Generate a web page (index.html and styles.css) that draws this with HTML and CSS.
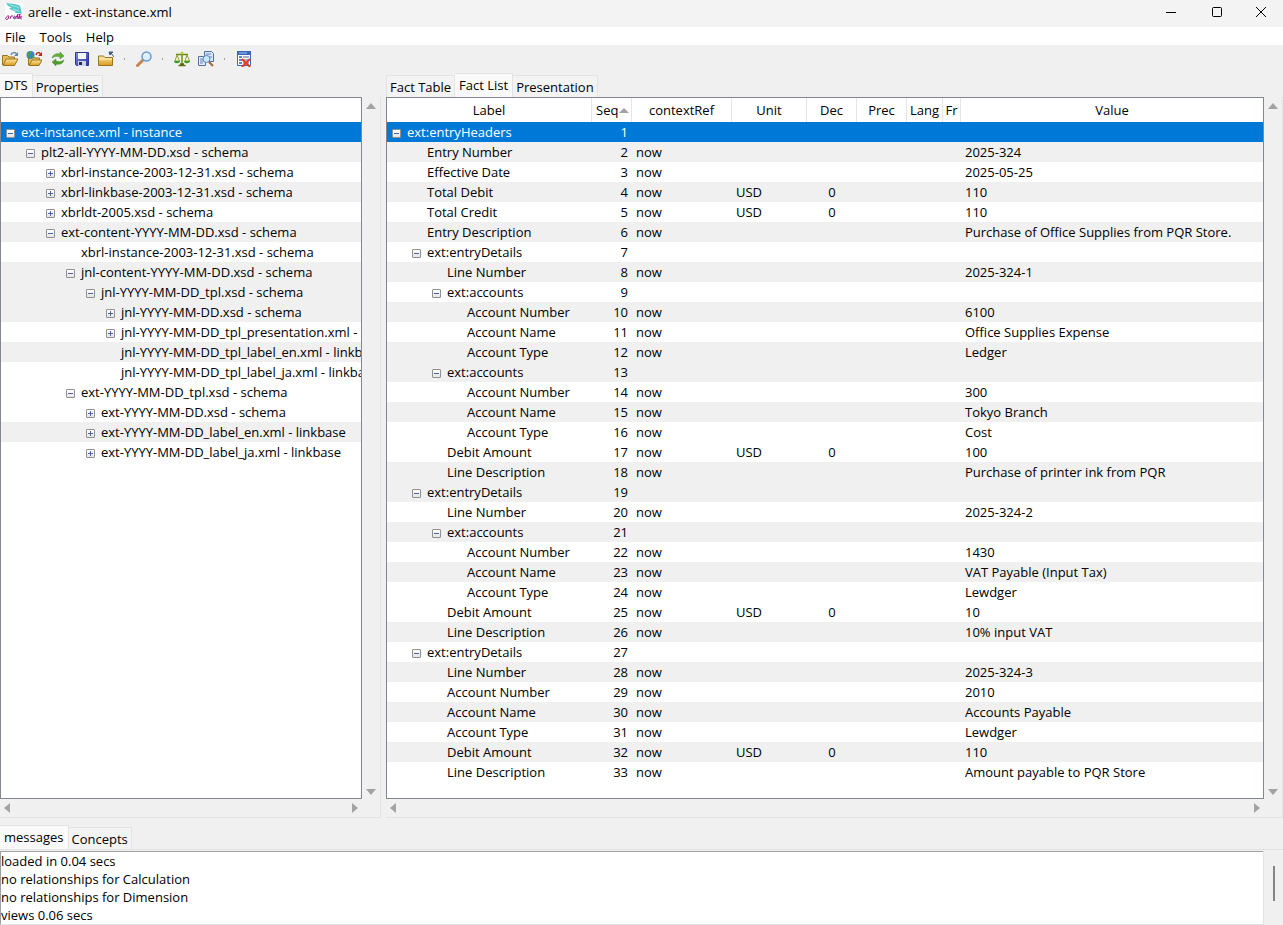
FILE: index.html
```html
<!DOCTYPE html>
<html lang="en">
<head>
  <meta charset="UTF-8">
  <title>arelle - ext-instance.xml</title>
  <link rel="stylesheet" href="styles.css">
</head>
<body>
  <!-- shared gradients -->
  <svg class="defs" aria-hidden="true">
    <defs>
      <linearGradient id="gold" x1="0" y1="0" x2="0" y2="1"><stop offset="0" stop-color="#fdeaa0"/><stop offset="1" stop-color="#d99a1c"/></linearGradient>
      <linearGradient id="blue" x1="0" y1="0" x2="1" y2="1"><stop offset="0" stop-color="#7f8df0"/><stop offset="1" stop-color="#2a2fa0"/></linearGradient>
    </defs>
  </svg>

  <header class="titlebar">
    <svg class="logo" viewBox="0 0 18 18" aria-hidden="true">
      <rect width="18" height="18" fill="#fff"/>
      <path d="M1 0c4 1 10 0 14 3 1 2 1 5 2 8-3-1-5 0-8-2l2-1C7 8 5 6 4 5l3 0C4 4 2 2 1 0z" fill="#58c9c9"/>
      <path d="M5 2c3 1 6 1 9 3M8 6l6 2" stroke="#a5e6e4" fill="none"/>
      <path d="M1 15c1-3 3-2 3-2l-1 3c-2 1-3 0-2-1m4 1l1-3 2 0M8 15c2 0 3-1 2-2-2 0-2 3 0 3l3-5-1 5m1 0l2-5-1 5m1-1c2 0 2-2 1-2-2 1-1 3 1 3" stroke="#a3208f" fill="none"/>
    </svg>
    <span class="title">arelle - ext-instance.xml</span>
    <button class="win" aria-label="Minimize"><svg viewBox="0 0 12 12"><path d="M1 6.500h10" stroke="#000"/></svg></button>
    <button class="win" aria-label="Maximize"><svg viewBox="0 0 12 12"><rect x="1.500" y="1.500" width="9" height="9" rx="1" fill="none" stroke="#000"/></svg></button>
    <button class="win" aria-label="Close"><svg viewBox="0 0 12 12"><path d="M1 1l10 10M11 1L1 11" stroke="#000" fill="none"/></svg></button>
  </header>

  <nav class="menubar">
    <button>File</button>
    <button>Tools</button>
    <button>Help</button>
  </nav>

  <div class="toolbar">
    <button aria-label="Open file"><svg viewBox="0 0 16 16">
      <path d="M.5 14V4.500h5L7 6h5.500v3" fill="#e9bd55" stroke="#9a7420"/>
      <path d="M1 14.500L4 8h12l-3.500 6.500z" fill="url(#gold)" stroke="#9a7420"/>
      <path d="M9 4c1-3 4-3 5.500-1" fill="none" stroke="#6d87a8" stroke-width="1.500"/><path d="M16 1v4h-4z" fill="#6d87a8"/></svg></button>
    <button aria-label="Open web"><svg viewBox="0 0 16 16">
      <path d="M2.500 14V6h5L9 7h4.500v2" fill="#e9bd55" stroke="#9a7420"/>
      <path d="M3 14.500L6 9h10l-3 5.500z" fill="url(#gold)" stroke="#9a7420"/>
      <circle cx="4.500" cy="4" r="4" fill="#3c7fd0"/><path d="M1 3l3-3 2 2-3 2 1 3-2-1zM6 4l2 1-2 3z" fill="#45a83c"/>
      <path d="M10 4c1-3 3-3 4.500-1" fill="none" stroke="#c62020" stroke-width="1.500"/><path d="M16 1v4h-4z" fill="#c62020"/></svg></button>
    <button aria-label="Reload"><svg viewBox="0 0 16 16">
      <path d="M2 7c1-4 5-5 8-4V1l4 4-4 3V6C7 5 5 5 2 7z" fill="#63b03a" stroke="#3f8724" stroke-width=".5"/>
      <path d="M14 9c-1 4-5 5-8 4v2l-4-4 4-3v2c3 1 5 1 8-1z" fill="#4f9c2c" stroke="#3f8724" stroke-width=".5"/></svg></button>
    <button aria-label="Save"><svg viewBox="0 0 16 16">
      <path d="M1.500 1.500h13v13h-12l-1-1z" fill="url(#blue)" stroke="#30359a"/>
      <path d="M4 2h8v6H4z" fill="#f4f6ff"/><path d="M4 10h8v5H4z" fill="#cdd2e4"/><path d="M5 11h3v3H5z" fill="#252a66"/></svg></button>
    <button aria-label="Close file"><svg viewBox="0 0 16 16">
      <path d="M.5 14.500V5h5L7 6.500h7.500v8z" fill="url(#gold)" stroke="#9a7420"/>
      <path d="M1 8h13" stroke="#fff0b8"/><path d="M11 1h4L12 4zM13 2l3 4" fill="#3b5a86" stroke="#3b5a86"/></svg></button>
    <span class="sep"></span>
    <button aria-label="Find"><svg viewBox="0 0 16 16">
      <path d="M1.500 14.500L7 9" stroke="#c9824e" stroke-width="3" stroke-linecap="round"/>
      <circle cx="10.500" cy="5.500" r="4.500" fill="#d7efff" stroke="#6b9bd6" stroke-width="1.500"/><path d="M8 5c0-2 2-2 3-2" stroke="#fff" fill="none"/></svg></button>
    <span class="sep"></span>
    <button aria-label="Compare"><svg viewBox="0 0 16 16">
      <path d="M8 1v12M2 3.500h12" stroke="#6c8a12" stroke-width="1.500"/><path d="M4.500 14.500h7M6 13h4" stroke="#556f10" stroke-width="1.500"/>
      <path d="M3 4L1 10h4.500zM13 4l-2 6h4.500z" fill="#f6f8d8" stroke="#8fa22e"/>
      <path d="M0 10h6c0 3-6 3-6 0zM10 10h6c0 3-6 3-6 0z" fill="#3b9a25"/><circle cx="8" cy="2" r="1.500" fill="#b8cc28"/></svg></button>
    <button aria-label="Validate"><svg viewBox="0 0 16 16">
      <path d="M6.500.5h7l2 2v8h-9z" fill="#dce8f8" stroke="#51719f"/><path d="M.5 5.500h7v9h-7z" fill="#e8f0fb" stroke="#51719f"/>
      <path d="M8 3h5M2 8h3M2 10h3M2 12h3M12 6h2" stroke="#5e83b8"/>
      <circle cx="8.500" cy="8" r="3.500" fill="#c6e9fb" stroke="#5e83b8"/><path d="M11 11l4 4" stroke="#a7653c" stroke-width="2"/></svg></button>
    <span class="sep"></span>
    <button aria-label="Clear messages"><svg viewBox="0 0 16 16">
      <path d="M1.500.5h13v14h-13z" fill="#fff" stroke="#3b67b8"/><path d="M1 0h14v4H1z" fill="#3b67b8"/><path d="M3 2h8" stroke="#a9c4f0"/>
      <path d="M3 5h3v2H3zM3 8h3v2H3zM3 11h3v2H3z" fill="#5a88d4"/><path d="M7 6h6M7 9h6M7 12h6" stroke="#4b64a0"/>
      <path d="M6 8l8 8M14 8l-8 8" stroke="#e33b22" stroke-width="2"/></svg></button>
  </div>

  <main class="panes">
    <section class="pane left">
      <div class="tabs">
        <button class="active">DTS</button>
        <button>Properties</button>
      </div>
      <div class="frame">
        <div class="view">
          <div class="tree-head"></div>
          <ul class="tree">
            <li class="lv0 selected"><button class="tg" aria-label="Collapse"></button>ext-instance.xml - instance</li>
            <li class="lv1 odd"><button class="tg" aria-label="Collapse"></button>plt2-all-YYYY-MM-DD.xsd - schema</li>
            <li class="lv2"><button class="tg plus" aria-label="Expand"></button>xbrl-instance-2003-12-31.xsd - schema</li>
            <li class="lv2 odd"><button class="tg plus" aria-label="Expand"></button>xbrl-linkbase-2003-12-31.xsd - schema</li>
            <li class="lv2"><button class="tg plus" aria-label="Expand"></button>xbrldt-2005.xsd - schema</li>
            <li class="lv2 odd"><button class="tg" aria-label="Collapse"></button>ext-content-YYYY-MM-DD.xsd - schema</li>
            <li class="lv3">xbrl-instance-2003-12-31.xsd - schema</li>
            <li class="lv3 odd"><button class="tg" aria-label="Collapse"></button>jnl-content-YYYY-MM-DD.xsd - schema</li>
            <li class="lv4 odd"><button class="tg" aria-label="Collapse"></button>jnl-YYYY-MM-DD_tpl.xsd - schema</li>
            <li class="lv5 odd"><button class="tg plus" aria-label="Expand"></button>jnl-YYYY-MM-DD.xsd - schema</li>
            <li class="lv5"><button class="tg plus" aria-label="Expand"></button>jnl-YYYY-MM-DD_tpl_presentation.xml - linkbase</li>
            <li class="lv5 odd">jnl-YYYY-MM-DD_tpl_label_en.xml - linkbase</li>
            <li class="lv5">jnl-YYYY-MM-DD_tpl_label_ja.xml - linkbase</li>
            <li class="lv3"><button class="tg" aria-label="Collapse"></button>ext-YYYY-MM-DD_tpl.xsd - schema</li>
            <li class="lv4"><button class="tg plus" aria-label="Expand"></button>ext-YYYY-MM-DD.xsd - schema</li>
            <li class="lv4 odd"><button class="tg plus" aria-label="Expand"></button>ext-YYYY-MM-DD_label_en.xml - linkbase</li>
            <li class="lv4"><button class="tg plus" aria-label="Expand"></button>ext-YYYY-MM-DD_label_ja.xml - linkbase</li>
          </ul>
        </div>
        <div class="vbar"><i class="up"></i><i class="down"></i></div>
        <div class="hbar"><i class="prev"></i><i class="next"></i></div>
      </div>
    </section>

    <section class="pane right">
      <div class="tabs">
        <button>Fact Table</button>
        <button class="active">Fact List</button>
        <button>Presentation</button>
      </div>
      <div class="frame">
        <div class="view">
          <table class="facts">
            <colgroup>
              <col class="c-label"><col class="c-seq"><col class="c-ctx"><col class="c-unit"><col class="c-dec"><col class="c-dec"><col class="c-lang"><col class="c-fr"><col>
            </colgroup>
            <thead>
              <tr><th>Label</th><th class="sorted">Seq<i class="sort"></i></th><th>contextRef</th><th>Unit</th><th>Dec</th><th>Prec</th><th>Lang</th><th>Fr</th><th>Value</th></tr>
            </thead>
            <tbody>
              <tr class="selected"><td class="lv0"><button class="tg" aria-label="Collapse"></button>ext:entryHeaders</td><td>1</td><td></td><td></td><td></td><td></td><td></td><td></td><td></td></tr>
              <tr class="odd"><td class="lv1">Entry Number</td><td>2</td><td>now</td><td></td><td></td><td></td><td></td><td></td><td>2025-324</td></tr>
              <tr><td class="lv1">Effective Date</td><td>3</td><td>now</td><td></td><td></td><td></td><td></td><td></td><td>2025-05-25</td></tr>
              <tr class="odd"><td class="lv1">Total Debit</td><td>4</td><td>now</td><td>USD</td><td>0</td><td></td><td></td><td></td><td>110</td></tr>
              <tr><td class="lv1">Total Credit</td><td>5</td><td>now</td><td>USD</td><td>0</td><td></td><td></td><td></td><td>110</td></tr>
              <tr class="odd"><td class="lv1">Entry Description</td><td>6</td><td>now</td><td></td><td></td><td></td><td></td><td></td><td>Purchase of Office Supplies from PQR Store.</td></tr>
              <tr><td class="lv1"><button class="tg" aria-label="Collapse"></button>ext:entryDetails</td><td>7</td><td></td><td></td><td></td><td></td><td></td><td></td><td></td></tr>
              <tr class="odd"><td class="lv2">Line Number</td><td>8</td><td>now</td><td></td><td></td><td></td><td></td><td></td><td>2025-324-1</td></tr>
              <tr><td class="lv2"><button class="tg" aria-label="Collapse"></button>ext:accounts</td><td>9</td><td></td><td></td><td></td><td></td><td></td><td></td><td></td></tr>
              <tr class="odd"><td class="lv3">Account Number</td><td>10</td><td>now</td><td></td><td></td><td></td><td></td><td></td><td>6100</td></tr>
              <tr><td class="lv3">Account Name</td><td>11</td><td>now</td><td></td><td></td><td></td><td></td><td></td><td>Office Supplies Expense</td></tr>
              <tr class="odd"><td class="lv3">Account Type</td><td>12</td><td>now</td><td></td><td></td><td></td><td></td><td></td><td>Ledger</td></tr>
              <tr class="odd"><td class="lv2"><button class="tg" aria-label="Collapse"></button>ext:accounts</td><td>13</td><td></td><td></td><td></td><td></td><td></td><td></td><td></td></tr>
              <tr><td class="lv3">Account Number</td><td>14</td><td>now</td><td></td><td></td><td></td><td></td><td></td><td>300</td></tr>
              <tr class="odd"><td class="lv3">Account Name</td><td>15</td><td>now</td><td></td><td></td><td></td><td></td><td></td><td>Tokyo Branch</td></tr>
              <tr><td class="lv3">Account Type</td><td>16</td><td>now</td><td></td><td></td><td></td><td></td><td></td><td>Cost</td></tr>
              <tr><td class="lv2">Debit Amount</td><td>17</td><td>now</td><td>USD</td><td>0</td><td></td><td></td><td></td><td>100</td></tr>
              <tr class="odd"><td class="lv2">Line Description</td><td>18</td><td>now</td><td></td><td></td><td></td><td></td><td></td><td>Purchase of printer ink from PQR</td></tr>
              <tr class="odd"><td class="lv1"><button class="tg" aria-label="Collapse"></button>ext:entryDetails</td><td>19</td><td></td><td></td><td></td><td></td><td></td><td></td><td></td></tr>
              <tr><td class="lv2">Line Number</td><td>20</td><td>now</td><td></td><td></td><td></td><td></td><td></td><td>2025-324-2</td></tr>
              <tr class="odd"><td class="lv2"><button class="tg" aria-label="Collapse"></button>ext:accounts</td><td>21</td><td></td><td></td><td></td><td></td><td></td><td></td><td></td></tr>
              <tr><td class="lv3">Account Number</td><td>22</td><td>now</td><td></td><td></td><td></td><td></td><td></td><td>1430</td></tr>
              <tr class="odd"><td class="lv3">Account Name</td><td>23</td><td>now</td><td></td><td></td><td></td><td></td><td></td><td>VAT Payable (Input Tax)</td></tr>
              <tr><td class="lv3">Account Type</td><td>24</td><td>now</td><td></td><td></td><td></td><td></td><td></td><td>Lewdger</td></tr>
              <tr><td class="lv2">Debit Amount</td><td>25</td><td>now</td><td>USD</td><td>0</td><td></td><td></td><td></td><td>10</td></tr>
              <tr class="odd"><td class="lv2">Line Description</td><td>26</td><td>now</td><td></td><td></td><td></td><td></td><td></td><td>10% input VAT</td></tr>
              <tr><td class="lv1"><button class="tg" aria-label="Collapse"></button>ext:entryDetails</td><td>27</td><td></td><td></td><td></td><td></td><td></td><td></td><td></td></tr>
              <tr class="odd"><td class="lv2">Line Number</td><td>28</td><td>now</td><td></td><td></td><td></td><td></td><td></td><td>2025-324-3</td></tr>
              <tr><td class="lv2">Account Number</td><td>29</td><td>now</td><td></td><td></td><td></td><td></td><td></td><td>2010</td></tr>
              <tr class="odd"><td class="lv2">Account Name</td><td>30</td><td>now</td><td></td><td></td><td></td><td></td><td></td><td>Accounts Payable</td></tr>
              <tr><td class="lv2">Account Type</td><td>31</td><td>now</td><td></td><td></td><td></td><td></td><td></td><td>Lewdger</td></tr>
              <tr class="odd"><td class="lv2">Debit Amount</td><td>32</td><td>now</td><td>USD</td><td>0</td><td></td><td></td><td></td><td>110</td></tr>
              <tr><td class="lv2">Line Description</td><td>33</td><td>now</td><td></td><td></td><td></td><td></td><td></td><td>Amount payable to PQR Store</td></tr>
            </tbody>
          </table>
        </div>
        <div class="vbar"><i class="up"></i><i class="down"></i></div>
        <div class="hbar"><i class="prev"></i><i class="next"></i></div>
      </div>
    </section>
  </main>

  <section class="bottom">
    <div class="tabs">
      <button class="active">messages</button>
      <button>Concepts</button>
    </div>
    <div class="log-wrap">
      <ul class="log">
        <li>loaded in 0.04 secs</li>
        <li>no relationships for Calculation</li>
        <li>no relationships for Dimension</li>
        <li>views 0.06 secs</li>
      </ul>
      <div class="log-bar"><i class="thumb"></i></div>
    </div>
  </section>
</body>
</html>
```
FILE: styles.css
```css
* {
  box-sizing: border-box;
}
body {
  margin: 0;
  min-height: 100vh;
  display: flex;
  flex-direction: column;
  background: #f0f0f0;
  color: #000;
  font-family: "Open Sans", "Noto Sans", sans-serif;
  font-size: 13px;
  line-height: 20px;
}
button {
  padding: 0;
  border: none;
  background: none;
  color: inherit;
  font: inherit;
}
svg {
  display: block;
}
ul {
  margin: 0;
  padding: 0;
  list-style: none;
}
.defs {
  position: absolute;
  width: 0;
  height: 0;
}

/* title bar */
.titlebar {
  display: flex;
  align-items: center;
  height: 27px;
  padding-left: 5px;
  padding-right: 1px;
  padding-bottom: 4px;
  background: #f3f3f3;
}
.logo {
  width: 18px;
  height: 18px;
}
.title {
  flex: 1;
  padding-left: 5px;
}
.win {
  display: flex;
  justify-content: center;
  width: 46px;
}
.win:last-child {
  width: 42px;
}
.win svg {
  width: 12px;
  height: 12px;
}

.menubar {
  display: flex;
  gap: 14px;
  height: 18px;
  padding-left: 5px;
  background: #fff;
}
.toolbar {
  display: flex;
  align-items: center;
  gap: 8px;
  height: 28px;
  padding-left: 2px;
}
.toolbar svg {
  width: 16px;
  height: 16px;
}
.sep {
  width: 6px;
  height: 2px;
  border-left: 2px solid #f0f0f0;
  border-right: 3px solid #f0f0f0;
  background: #a0a0a0;
}

/* tabs */
.tabs {
  display: flex;
  align-items: flex-end;
  height: 24px;
}
.tabs button {
  height: 22px;
  padding: 0 3px;
  border: 1px solid #e3e3e3;
  border-left: none;
  border-bottom: none;
  background: #f3f3f3;
  line-height: 20px;
  white-space: nowrap;
}
.tabs button.active {
  height: 24px;
  padding: 0 4px 2px;
  background: #fafafa;
}
.right .tabs button:first-child {
  border-left: 1px solid #e3e3e3;
}

/* panes */
.panes {
  flex: 1;
  display: flex;
  gap: 5px;
}
.pane {
  display: flex;
  flex-direction: column;
  min-width: 0;
}
.left {
  flex: 0 0 381px;
}
.right {
  flex: 1;
}
.frame {
  flex: 1;
  display: grid;
  grid-template-columns: minmax(0, 1fr) 18px;
  grid-template-rows: 1fr 18px;
  border-right: 1px solid #e3e3e3;
  border-bottom: 1px solid #e3e3e3;
}
.view {
  min-height: 702px;
  overflow: hidden;
  border: 1px solid #828790;
  background: #fff;
}
.vbar, .hbar {
  display: flex;
  justify-content: space-between;
}
.vbar {
  flex-direction: column;
  align-items: center;
  padding: 6px 0 4px;
}
.hbar {
  align-items: center;
  padding: 0 4px;
}
.up, .down, .sort {
  border-left: 5px solid transparent;
  border-right: 5px solid transparent;
}
.up {
  border-bottom: 6px solid #a3a3a3;
}
.down {
  border-top: 6px solid #a3a3a3;
}
.prev, .next {
  border-top: 5px solid transparent;
  border-bottom: 5px solid transparent;
}
.prev {
  border-right: 6px solid #a3a3a3;
}
.next {
  border-left: 6px solid #a3a3a3;
}

/* tree rows */
.tree-head {
  height: 24px;
}
.tree li {
  height: 20px;
  white-space: nowrap;
}
.odd {
  background: #f0f0f0;
}
.selected {
  background: #0078d7;
  color: #fff;
}
.lv0 { padding-left: 20px; }
.lv1 { padding-left: 40px; }
.lv2 { padding-left: 60px; }
.lv3 { padding-left: 80px; }
.lv4 { padding-left: 100px; }
.lv5 { padding-left: 120px; }
.tg {
  width: 9px;
  height: 9px;
  margin-left: -15px;
  margin-right: 6px;
  border: 1px solid #919191;
  border-radius: 1px;
  background: linear-gradient(#4b63a7, #4b63a7) center / 5px 1px no-repeat, linear-gradient(#fff, #e4e4e4);
}
.tg.plus {
  background: linear-gradient(#4b63a7, #4b63a7) center / 5px 1px no-repeat, linear-gradient(#4b63a7, #4b63a7) center / 1px 5px no-repeat, linear-gradient(#fff, #e4e4e4);
}

/* fact list */
.facts {
  width: 100%;
  table-layout: fixed;
  border-collapse: separate;
  border-spacing: 0;
}
.c-label { width: 205px; }
.c-seq { width: 40px; }
.c-ctx { width: 100px; }
.c-unit { width: 75px; }
.c-dec { width: 50px; }
.c-lang { width: 36px; }
.c-fr { width: 18px; }
.facts th {
  height: 24px;
  padding: 0;
  border-right: 1px solid #e5e5e5;
  font-weight: normal;
  overflow: hidden;
}
.facts th:last-child {
  border-right: none;
}
.facts td {
  height: 20px;
  padding-top: 0;
  padding-bottom: 0;
  padding-right: 0;
  white-space: nowrap;
}
.facts td:nth-child(2) {
  padding-right: 4px;
  text-align: right;
}
.facts td:nth-child(n+3) {
  padding-left: 4px;
}
.facts td:nth-child(5) {
  padding-left: 0;
  text-align: center;
}
.facts .sorted {
  padding-left: 4px;
  text-align: left;
  white-space: nowrap;
}
.sort {
  display: inline-block;
  margin-left: 1px;
  border-bottom: 5px solid #a89f9f;
  vertical-align: 2px;
}

/* messages */
.bottom {
  padding-top: 8px;
}
.bottom .tabs {
  height: 23px;
}
.log-wrap {
  display: flex;
  border-top: 1px solid #e3e3e3;
  padding-top: 1px;
}
.log {
  flex: 1;
  min-height: 74px;
  border-top: 1px solid #a0a0a0;
  border-left: 1px solid #a0a0a0;
  border-bottom: 1px solid #e3e3e3;
  background: #fff;
  line-height: 18px;
}
.log-bar {
  width: 20px;
  padding: 15px 9px 0;
  border-left: 1px solid #e3e3e3;
}
.thumb {
  display: block;
  width: 2px;
  height: 35px;
  background: #858585;
}
```
